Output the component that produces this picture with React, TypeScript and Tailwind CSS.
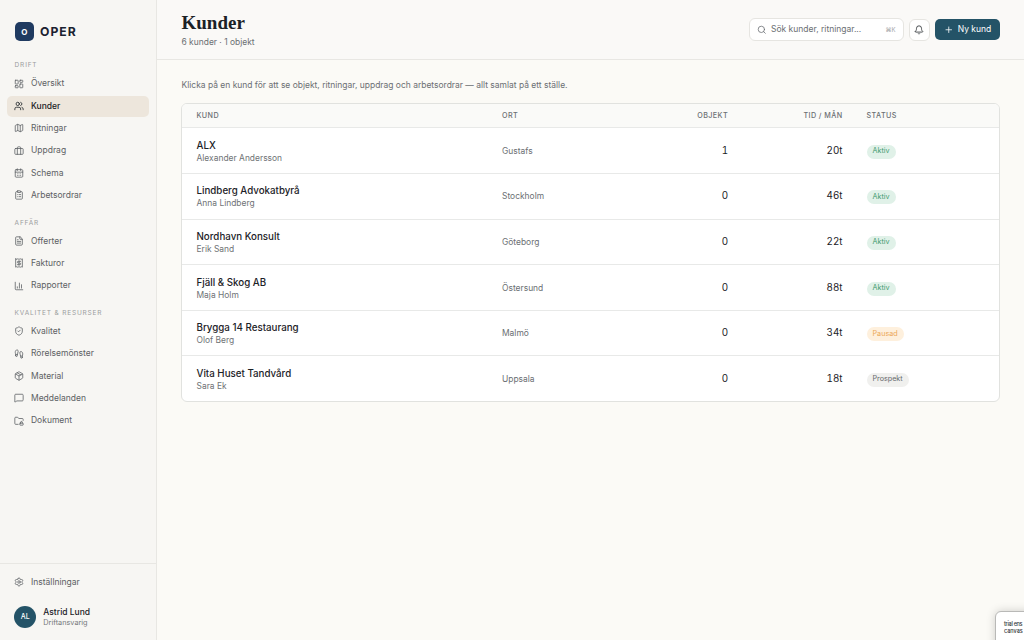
import type { ReactNode } from 'react';
import { clsx } from 'clsx';
import {
    Bell,
    Briefcase,
    CalendarDays,
    ChartColumn,
    ClipboardList,
    FileText,
    FolderLock,
    Footprints,
    LayoutDashboard,
    Map,
    MessageSquare,
    Package,
    Plus,
    Receipt,
    Search,
    Settings,
    ShieldCheck,
    Users,
    type LucideIcon,
} from 'lucide-react';

type NavEntry = { label: string; icon: LucideIcon; active?: boolean };
type Status = 'Aktiv' | 'Pausad' | 'Prospekt';

const sections: { title: string; items: NavEntry[] }[] = [
    {
        title: 'DRIFT',
        items: [
            { label: 'Översikt', icon: LayoutDashboard },
            { label: 'Kunder', icon: Users, active: true },
            { label: 'Ritningar', icon: Map },
            { label: 'Uppdrag', icon: Briefcase },
            { label: 'Schema', icon: CalendarDays },
            { label: 'Arbetsordrar', icon: ClipboardList },
        ],
    },
    {
        title: 'AFFÄR',
        items: [
            { label: 'Offerter', icon: FileText },
            { label: 'Fakturor', icon: Receipt },
            { label: 'Rapporter', icon: ChartColumn },
        ],
    },
    {
        title: 'KVALITET & RESURSER',
        items: [
            { label: 'Kvalitet', icon: ShieldCheck },
            { label: 'Rörelsemönster', icon: Footprints },
            { label: 'Material', icon: Package },
            { label: 'Meddelanden', icon: MessageSquare },
            { label: 'Dokument', icon: FolderLock },
        ],
    },
];

const customers: { name: string; contact: string; city: string; objects: number; hours: string; status: Status }[] = [
    { name: 'ALX', contact: 'Alexander Andersson', city: 'Gustafs', objects: 1, hours: '20t', status: 'Aktiv' },
    { name: 'Lindberg Advokatbyrå', contact: 'Anna Lindberg', city: 'Stockholm', objects: 0, hours: '46t', status: 'Aktiv' },
    { name: 'Nordhavn Konsult', contact: 'Erik Sand', city: 'Göteborg', objects: 0, hours: '22t', status: 'Aktiv' },
    { name: 'Fjäll & Skog AB', contact: 'Maja Holm', city: 'Östersund', objects: 0, hours: '88t', status: 'Aktiv' },
    { name: 'Brygga 14 Restaurang', contact: 'Olof Berg', city: 'Malmö', objects: 0, hours: '34t', status: 'Pausad' },
    { name: 'Vita Huset Tandvård', contact: 'Sara Ek', city: 'Uppsala', objects: 0, hours: '18t', status: 'Prospekt' },
];

const statusStyles: Record<Status, string> = {
    Aktiv: 'bg-[#e0f1e8] text-[#3f9a6e]',
    Pausad: 'bg-[#fef0dd] text-[#eba756]',
    Prospekt: 'bg-[#f0f0ee] text-[#666a6d]',
};

const NavItem = ({ label, icon: Icon, active }: NavEntry) => (
    <a
        className={clsx(
            'flex h-[21px] items-center gap-[7px] rounded-[5px] pl-[6.7px] text-[8.5px]',
            active ? 'bg-[#ede6dc] font-medium text-[#1b2126]' : 'text-[#5d6164]'
        )}
    >
        <Icon className="h-[10px] w-[10px] shrink-0" strokeWidth={1.9} />
        <span>{label}</span>
    </a>
);

const Sidebar = () => (
    <aside className="flex w-[157px] shrink-0 flex-col border-r border-[#e8e7e3] bg-[#f7f6f3]">
        <div className="flex items-center gap-[6px] pt-[21.5px] pl-[14.5px]">
            <div className="flex h-[19.5px] w-[19.5px] items-center justify-center rounded-[5px] bg-[#1f3a60] text-[8px] font-bold text-white">
                O
            </div>
            <span className="text-[12.2px] leading-[20px] font-bold tracking-[1px] text-[#1b2230]">OPER</span>
        </div>
        <nav className="px-[7.3px] pt-[7px]">
            {sections.map((section) => (
                <div key={section.title}>
                    <div className="h-[24.7px] pt-[12.9px] pl-[7.3px] text-[6.5px] leading-[8px] tracking-[0.83px] text-[#9b9d9e]">
                        {section.title}
                    </div>
                    <div className="flex flex-col gap-[1.33px]">
                        {section.items.map((item) => (
                            <NavItem key={item.label} {...item} />
                        ))}
                    </div>
                </div>
            ))}
        </nav>
        <div className="mt-auto h-[77.5px] border-t border-[#e8e7e3] px-[7.3px] pt-[8px]">
            <NavItem label="Inställningar" icon={Settings} />
            <div className="mt-[13.5px] flex items-center gap-[7px] pl-[7px]">
                <div className="flex h-[22px] w-[22px] items-center justify-center rounded-full bg-[#245367] text-[7px] font-medium text-white">
                    AL
                </div>
                <div>
                    <div className="text-[8.5px] leading-[11px] font-medium text-[#1b2126]">Astrid Lund</div>
                    <div className="text-[7.3px] leading-[10px] text-[#75787b]">Driftansvarig</div>
                </div>
            </div>
        </div>
    </aside>
);

const Header = () => (
    <header className="flex h-[60px] shrink-0 items-start justify-between border-b border-[#e8e7e3] bg-[#faf9f7] pr-[24px] pl-[24.5px]">
        <div className="pt-[11px]">
            <h1 className="font-['Liberation_Serif',serif] text-[19px] leading-[24px] font-bold text-[#1b2126]">Kunder</h1>
            <p className="mt-[1px] text-[8.45px] leading-[12px] text-[#6b6f73]">6 kunder · 1 objekt</p>
        </div>
        <div className="flex items-center gap-[5px] pt-[18px]">
            <div className="flex h-[23px] w-[154.5px] items-center rounded-[6px] border border-[#e6e5e1] bg-white px-[7px] text-[#6b6f73]">
                <Search className="h-[9.5px] w-[9.5px]" strokeWidth={2} />
                <span className="ml-[4.5px] text-[8.5px]">Sök kunder, ritningar...</span>
                <span className="ml-auto text-[6px] text-[#a3a5a7]">⌘K</span>
            </div>
            <button className="flex h-[22px] w-[21.5px] items-center justify-center rounded-[6px] border border-[#e6e5e1] bg-white text-[#2b3034]">
                <Bell className="h-[10px] w-[10px]" strokeWidth={2} />
            </button>
            <button className="flex h-[21.5px] w-[65px] items-center justify-center gap-[4.5px] rounded-[5px] bg-[#245367] text-[8.5px] text-white">
                <Plus className="h-[9.5px] w-[9.5px]" strokeWidth={2} />
                Ny kund
            </button>
        </div>
    </header>
);

const Row = ({ className, children }: { className: string; children: ReactNode }) => (
    <div className={clsx('grid grid-cols-[305.5px_120px_106px_114.5px_1fr] items-center pl-[14.3px]', className)}>{children}</div>
);

const CustomerTable = () => (
    <div className="mt-[11.6px] -ml-[0.3px] overflow-hidden rounded-[6px] border border-[#e1e2df] bg-white">
        <Row className="h-[23.7px] bg-[#fafaf8] pt-[1.4px] text-[7.2px] font-medium tracking-[0.4px] text-[#6b6f73]">
            <span>KUND</span>
            <span>ORT</span>
            <span className="text-right">OBJEKT</span>
            <span className="text-right">TID / MÅN</span>
            <span className="pl-[24px]">STATUS</span>
        </Row>
        {customers.map((c) => (
            <Row key={c.name} className="h-[45.65px] border-t border-[#e8e9e8] pt-[1px] text-[#1b2126]">
                <div>
                    <div className="text-[9.75px] leading-[13px] font-medium">{c.name}</div>
                    <div className="text-[8.45px] leading-[12px] text-[#6f7376]">{c.contact}</div>
                </div>
                <span className="text-[8.45px] text-[#6b6f73]">{c.city}</span>
                <span className="text-right text-[9.8px] tabular-nums">{c.objects}</span>
                <span className="text-right text-[9.8px] tabular-nums">{c.hours}</span>
                <div className="flex pt-[1px] pl-[24px]">
                    <span className={clsx('flex h-[14px] items-center rounded-full px-[6px] text-[7.2px]', statusStyles[c.status])}>
                        {c.status}
                    </span>
                </div>
            </Row>
        ))}
    </div>
);

export default function App() {
    return (
        <div className="relative flex h-screen w-full overflow-hidden bg-[#fbfaf6] font-[Inter,sans-serif]">
            <Sidebar />
            <div className="flex min-w-0 flex-1 flex-col">
                <Header />
                <main className="pt-[19px] pr-[24px] pl-[24.5px]">
                    <p className="text-[8.47px] leading-[12px] text-[#6b6f73]">
                        Klicka på en kund för att se objekt, ritningar, uppdrag och arbetsordrar — allt samlat på ett ställe.
                    </p>
                    <CustomerTable />
                </main>
            </div>
            {/* floating notice, mostly off screen */}
            <div className="absolute top-[611px] left-[995px] h-[40px] w-[120px] rounded-[6px] border border-[#b9b9b7] bg-white pt-[9px] pl-[8px] text-[5.5px] leading-[7px] font-medium whitespace-nowrap text-[#33373a] shadow-[0_0_10px_rgba(0,0,0,0.18)]">
                <div className="tracking-[-0.3px]">trial ens</div>
                <div>canvas</div>
            </div>
        </div>
    );
}
